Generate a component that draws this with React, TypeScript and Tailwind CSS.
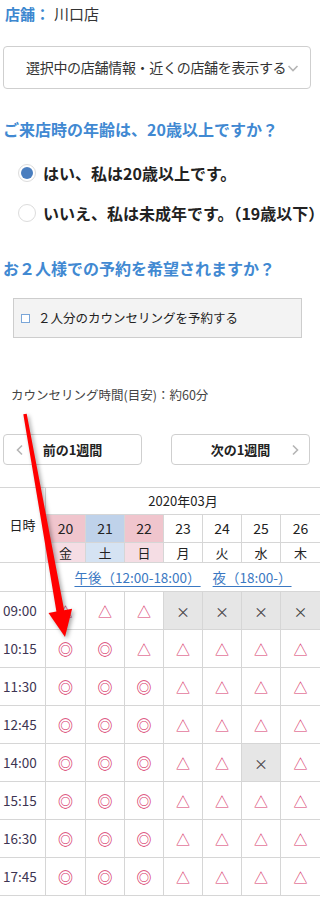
import React from 'react';

type Mark = 'o' | 't' | 'x';

const rows: { time: string; marks: Mark[] }[] = [
  { time: '09:00', marks: ['t', 't', 't', 'x', 'x', 'x', 'x'] },
  { time: '10:15', marks: ['o', 'o', 't', 't', 't', 't', 't'] },
  { time: '11:30', marks: ['o', 'o', 'o', 't', 't', 't', 't'] },
  { time: '12:45', marks: ['o', 'o', 'o', 't', 't', 't', 't'] },
  { time: '14:00', marks: ['o', 'o', 'o', 't', 't', 'x', 't'] },
  { time: '15:15', marks: ['o', 'o', 'o', 't', 't', 't', 't'] },
  { time: '16:30', marks: ['o', 'o', 'o', 't', 't', 't', 't'] },
  { time: '17:45', marks: ['o', 'o', 'o', 't', 't', 't', 't'] },
];

const days = [
  { d: '20', w: '金', top: 'bg-[#f0c5cd]', bot: 'bg-[#f5dde4]' },
  { d: '21', w: '土', top: 'bg-[#bfd2ea]', bot: 'bg-[#d5e3f3]' },
  { d: '22', w: '日', top: 'bg-[#f0c5cd]', bot: 'bg-[#f5dde4]' },
  { d: '23', w: '月', top: 'bg-white', bot: 'bg-white' },
  { d: '24', w: '火', top: 'bg-white', bot: 'bg-white' },
  { d: '25', w: '水', top: 'bg-white', bot: 'bg-white' },
  { d: '26', w: '木', top: 'bg-white', bot: 'bg-white' },
];

const colW = ['w-[40px]', 'w-[39px]', 'w-[39px]', 'w-[39px]', 'w-[39px]', 'w-[39px]', 'w-[39px]'];

const Cell = ({ mark, i }: { mark: Mark; i: number }) => (
  <div
    className={`${colW[i]} h-full flex items-center justify-center ${i < 6 ? 'border-r' : ''} border-[#d6d6d6] ${
      mark === 'x' ? 'bg-[#e6e6e6]' : 'bg-white'
    }`}
  >
    {mark === 'o' && <span className="text-[15px] font-bold text-[#d8386c] leading-none">◎</span>}
    {mark === 't' && <span className="text-[14px] text-[#d8386c] leading-none">△</span>}
    {mark === 'x' && <span className="text-[14px] text-[#444] leading-none">×</span>}
  </div>
);

const Chevron = ({ dir, className }: { dir: 'l' | 'r' | 'd'; className?: string }) => (
  <svg width="12" height="12" viewBox="0 0 12 12" className={className} fill="none" stroke="#b5b5b5" strokeWidth="1.6">
    {dir === 'l' && <path d="M8 1.5 L3.5 6 L8 10.5" />}
    {dir === 'r' && <path d="M4 1.5 L8.5 6 L4 10.5" />}
    {dir === 'd' && <path d="M1.5 4 L6 8.5 L10.5 4" />}
  </svg>
);

export default function App() {
  return (
    <div className="relative w-[320px] min-h-[899px] bg-white text-[#333] font-['Noto_Sans_CJK_JP',sans-serif] overflow-hidden">
      <div className="h-[28px] pl-[5px] flex items-center text-[15px]">
        <span className="font-bold text-[#3d87cf]">店舗：</span>
        <span className="ml-[4px]">川口店</span>
      </div>

      <div className="mt-[18px] ml-[3px] w-[308px] h-[43px] border border-[#cfcfcf] rounded-[4px] flex items-center pl-[22px] pr-[6px] text-[14px] whitespace-nowrap">
        <span className="tracking-[-0.3px]">選択中の店舗情報・近くの店舗を表示する</span>
        <Chevron dir="d" className="ml-[1px] shrink-0" />
      </div>

      <div className="mt-[28px] pl-[3px] h-[24px] flex items-center text-[16px] font-bold text-[#4189d2] whitespace-nowrap">
        ご来店時の年齢は、20歳以上ですか？
      </div>

      <div className="mt-[12px]">
        <div className="h-[40px] flex items-center pl-[18px] whitespace-nowrap">
          <span className="w-[18px] h-[18px] rounded-full border border-[#dcdcdc] flex items-center justify-center shrink-0">
            <span className="w-[12px] h-[12px] rounded-full bg-[#4a7ebf]" />
          </span>
          <span className="ml-[7px] text-[16px] font-bold text-[#222]">はい、私は20歳以上です。</span>
        </div>
        <div className="h-[40px] flex items-center pl-[18px] whitespace-nowrap">
          <span className="w-[18px] h-[18px] rounded-full border border-[#dcdcdc] shrink-0" />
          <span className="ml-[7px] text-[16px] font-bold text-[#222]">いいえ、私は未成年です。（19歳以下）</span>
        </div>
      </div>

      <div className="mt-[23px] pl-[3px] h-[24px] flex items-center text-[16px] font-bold text-[#4189d2] whitespace-nowrap">
        お２人様での予約を希望されますか？
      </div>

      <div className="mt-[18px] ml-[13px] w-[289px] h-[40px] bg-[#f3f3f3] border border-[#cdcdcd] flex items-center pl-[7px]">
        <span className="w-[9px] h-[9px] border border-[#7aa6d8] bg-white shrink-0" />
        <span className="ml-[8px] text-[12.5px] text-[#222]">２人分のカウンセリングを予約する</span>
      </div>

      <div className="mt-[47px] pl-[11px] h-[20px] flex items-center text-[12.5px] text-[#444] whitespace-nowrap">
        カウンセリング時間(目安)：約60分
      </div>

      <div className="mt-[29px] px-[3px] flex justify-between">
        <div className="relative w-[139px] h-[31px] border border-[#cfcfcf] rounded-[4px] flex items-center justify-center text-[13px] font-bold text-[#222]">
          <Chevron dir="l" className="absolute left-[10px]" />
          前の1週間
        </div>
        <div className="relative w-[139px] h-[31px] mr-[7px] border border-[#cfcfcf] rounded-[4px] flex items-center justify-center text-[13px] font-bold text-[#222]">
          次の1週間
          <Chevron dir="r" className="absolute right-[8px]" />
        </div>
      </div>

      <div className="mt-[22px] border-t border-[#d6d6d6]">
        <div className="flex h-[75px] border-b border-[#d6d6d6]">
          <div className="w-[46px] shrink-0 border-r border-[#d6d6d6] flex items-center justify-center text-[13px] text-[#222]">
            日時
          </div>
          <div className="flex-1 flex flex-col">
            <div className="h-[27px] border-b border-[#d6d6d6] flex items-center justify-center text-[13px] text-[#222]">
              2020年03月
            </div>
            <div className="h-[28px] flex border-b border-[#d6d6d6]">
              {days.map((d, i) => (
                <div
                  key={d.d}
                  className={`${colW[i]} ${d.top} ${i < 6 ? 'border-r' : ''} border-[#d6d6d6] flex items-center justify-center text-[14px] text-[#222]`}
                >
                  {d.d}
                </div>
              ))}
            </div>
            <div className="flex-1 flex">
              {days.map((d, i) => (
                <div
                  key={d.w}
                  className={`${colW[i]} ${d.bot} ${i < 6 ? 'border-r' : ''} border-[#d6d6d6] flex items-center justify-center text-[13px] text-[#222]`}
                >
                  {d.w}
                </div>
              ))}
            </div>
          </div>
        </div>

        <div className="flex h-[29px] border-b border-[#d6d6d6]">
          <div className="w-[46px] shrink-0 border-r border-[#d6d6d6]" />
          <div className="flex-1 flex items-center justify-center gap-[12px] text-[13.5px] text-[#3a78c2] whitespace-nowrap">
            <span className="underline underline-offset-[3px]">午後（12:00-18:00）</span>
            <span className="underline underline-offset-[3px]">夜（18:00-）</span>
          </div>
        </div>

        {rows.map((r) => (
          <div key={r.time} className="flex h-[38px] border-b border-[#d6d6d6]">
            <div className="w-[46px] shrink-0 border-r border-[#d6d6d6] flex items-center pl-[3px] text-[13.5px] text-[#3d3452]">
              {r.time}
            </div>
            {r.marks.map((m, i) => (
              <Cell key={i} mark={m} i={i} />
            ))}
          </div>
        ))}
      </div>

      <svg
        className="absolute left-0 top-0 pointer-events-none"
        width="320"
        height="899"
        viewBox="0 0 320 899"
        style={{ filter: 'drop-shadow(2px 2px 2px rgba(0,0,0,0.35))' }}
      >
        <polygon
          points="23.3,414.3 26.7,413.7 64.2,610.2 72.1,608.7 65,637 48.5,612.9 56.4,611.4"
          fill="#ff0000"
        />
      </svg>
    </div>
  );
}
